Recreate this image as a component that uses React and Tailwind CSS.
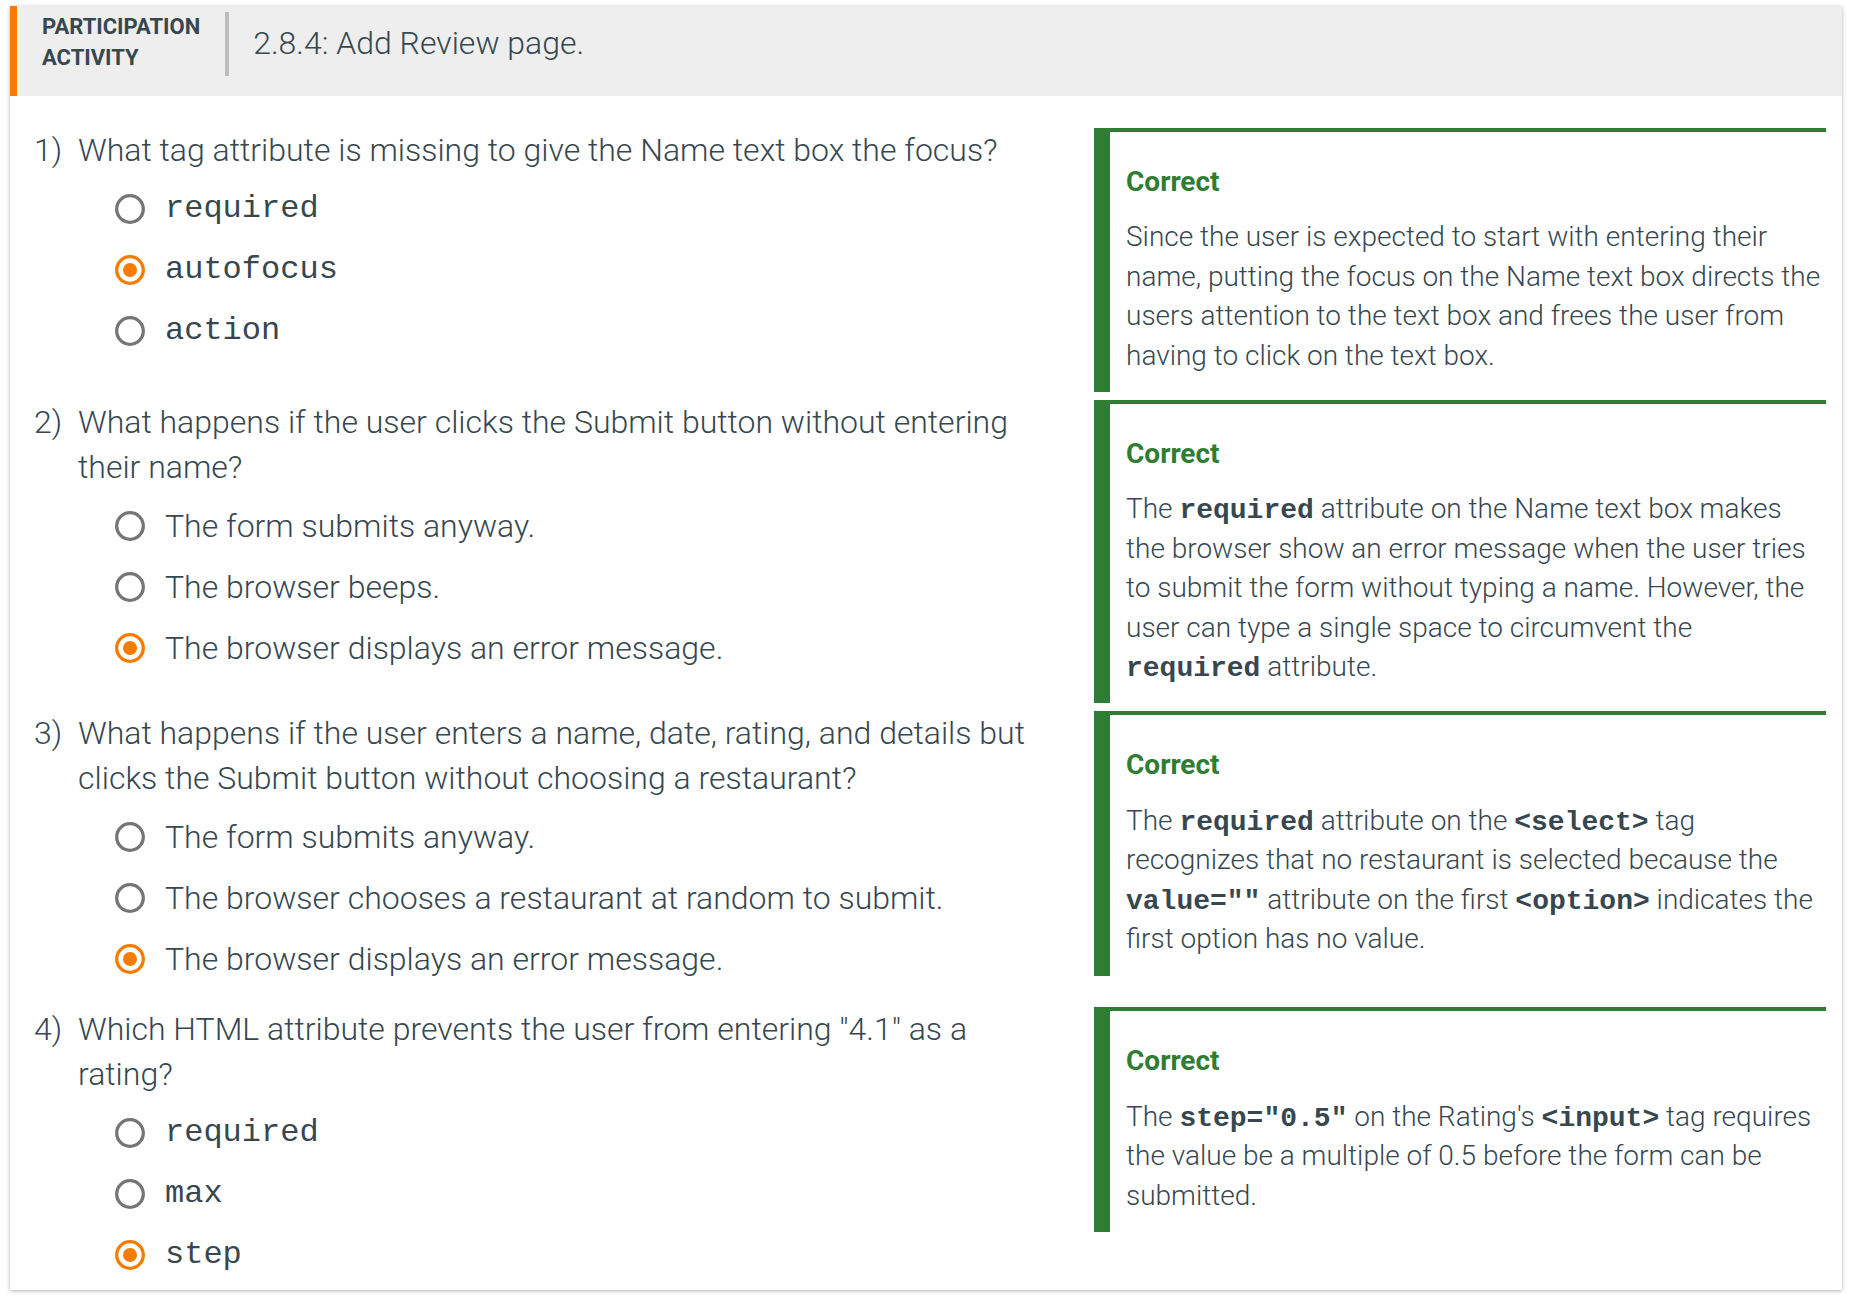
import React from 'react';

const Code = ({ children, bold }) => (
    <code className={"leading-none font-['Liberation_Mono',monospace] " + (bold ? 'font-bold' : 'font-normal')}>{children}</code>
);

const Radio = ({ checked }) => (
    <svg width="30" height="30" viewBox="0 0 30 30" className="shrink-0">
        <circle cx="15" cy="15" r="13.3" fill="none" stroke={checked ? '#f57c00' : '#757575'} strokeWidth="3.3" />
        {checked && <circle cx="15" cy="15" r="7" fill="#f57c00" />}
    </svg>
);

const questions = [
    {
        num: '1)',
        text: 'What tag attribute is missing to give the Name text box the focus?',
        mono: true,
        options: ['required', 'autofocus', 'action'],
        answer: 1,
        feedback: (
            <>Since the user is expected to start with entering their name, putting the focus on the Name text box directs the users attention to the text box and frees the user from having to click on the text box.</>
        ),
    },
    {
        num: '2)',
        text: 'What happens if the user clicks the Submit button without entering their name?',
        mono: false,
        options: ['The form submits anyway.', 'The browser beeps.', 'The browser displays an error message.'],
        answer: 2,
        feedback: (
            <>The <Code bold>required</Code> attribute on the Name text box makes the browser show an error message when the user tries to submit the form without typing a name. However, the user can type a single space to circumvent the <Code bold>required</Code> attribute.</>
        ),
    },
    {
        num: '3)',
        text: 'What happens if the user enters a name, date, rating, and details but clicks the Submit button without choosing a restaurant?',
        mono: false,
        options: ['The form submits anyway.', 'The browser chooses a restaurant at random to submit.', 'The browser displays an error message.'],
        answer: 2,
        feedback: (
            <>The <Code bold>required</Code> attribute on the <Code bold>&lt;select&gt;</Code> tag recognizes that no restaurant is selected because the <Code bold>value=""</Code> attribute on the first <Code bold>&lt;option&gt;</Code> indicates the first option has no value.</>
        ),
    },
    {
        num: '4)',
        text: 'Which HTML attribute prevents the user from entering "4.1" as a rating?',
        mono: true,
        options: ['required', 'max', 'step'],
        answer: 2,
        feedback: (
            <>The <Code bold>step="0.5"</Code> on the Rating's <Code bold>&lt;input&gt;</Code> tag requires the value be a multiple of 0.5 before the form can be submitted.</>
        ),
    },
];

const Feedback = ({ children }) => (
    <div className="w-[732px] shrink-0 mb-2 border-t-4 border-l-[16px] border-[#2e7d32] pl-[16px] pr-[4px] pt-[30px] pb-[17px]">
        <div className="text-[28px] leading-[39.4px] font-bold text-[#2e7d32]">Correct</div>
        <p className="mt-[16px] text-[28px] leading-[39.4px] font-light text-[#37474f]">{children}</p>
    </div>
);

const QuestionRow = ({ q, last }) => (
    <div className="flex items-start">
        <div className={"flex-1 min-w-0 pr-[49px] " + (last ? 'pb-0' : 'pb-[18px]')}>
            <div className="flex text-[32px] leading-[45px] font-light text-[#37474f]">
                <span className="w-[44px] shrink-0">{q.num}</span>
                <span className="flex-1">{q.text}</span>
            </div>
            <div className="mt-[5px] pl-[81px]">
                {q.options.map((opt, i) => (
                    <div key={i} className="h-[61px] flex items-center gap-[20px]">
                        <Radio checked={i === q.answer} />
                        {q.mono ? (
                            <span className="text-[32px] font-['Liberation_Mono',monospace] text-[#37474f]">{opt}</span>
                        ) : (
                            <span className="text-[32px] font-light text-[#37474f]">{opt}</span>
                        )}
                    </div>
                ))}
            </div>
        </div>
        <Feedback>{q.feedback}</Feedback>
    </div>
);

export default function App() {
    return (
        <div className="min-h-screen bg-white pt-[6px] font-['Roboto',sans-serif]">
            <div className="mx-[10px] bg-white shadow-[0_1px_4px_rgba(0,0,0,0.3)]">
                <div className="flex items-start bg-[#eeeeee] border-l-[7px] border-[#f57c00] pt-[5px] pb-[20px] pl-[25px]">
                    <div className="text-[22px] leading-[31px] font-bold text-[#37474f] uppercase">
                        <div>Participation</div>
                        <div>Activity</div>
                    </div>
                    <div className="ml-[25px] mt-[1px] w-[4px] h-[64px] bg-[#bdbdbd]"></div>
                    <div className="ml-[24px] text-[32px] leading-[64px] font-light text-[#37474f]">2.8.4: Add Review page.</div>
                </div>
                <div className="pt-[32px] pl-[24px] pr-[16px] pb-[5px]">
                    {questions.map((q, i) => (
                        <QuestionRow key={i} q={q} last={i === questions.length - 1} />
                    ))}
                </div>
            </div>
        </div>
    );
}
